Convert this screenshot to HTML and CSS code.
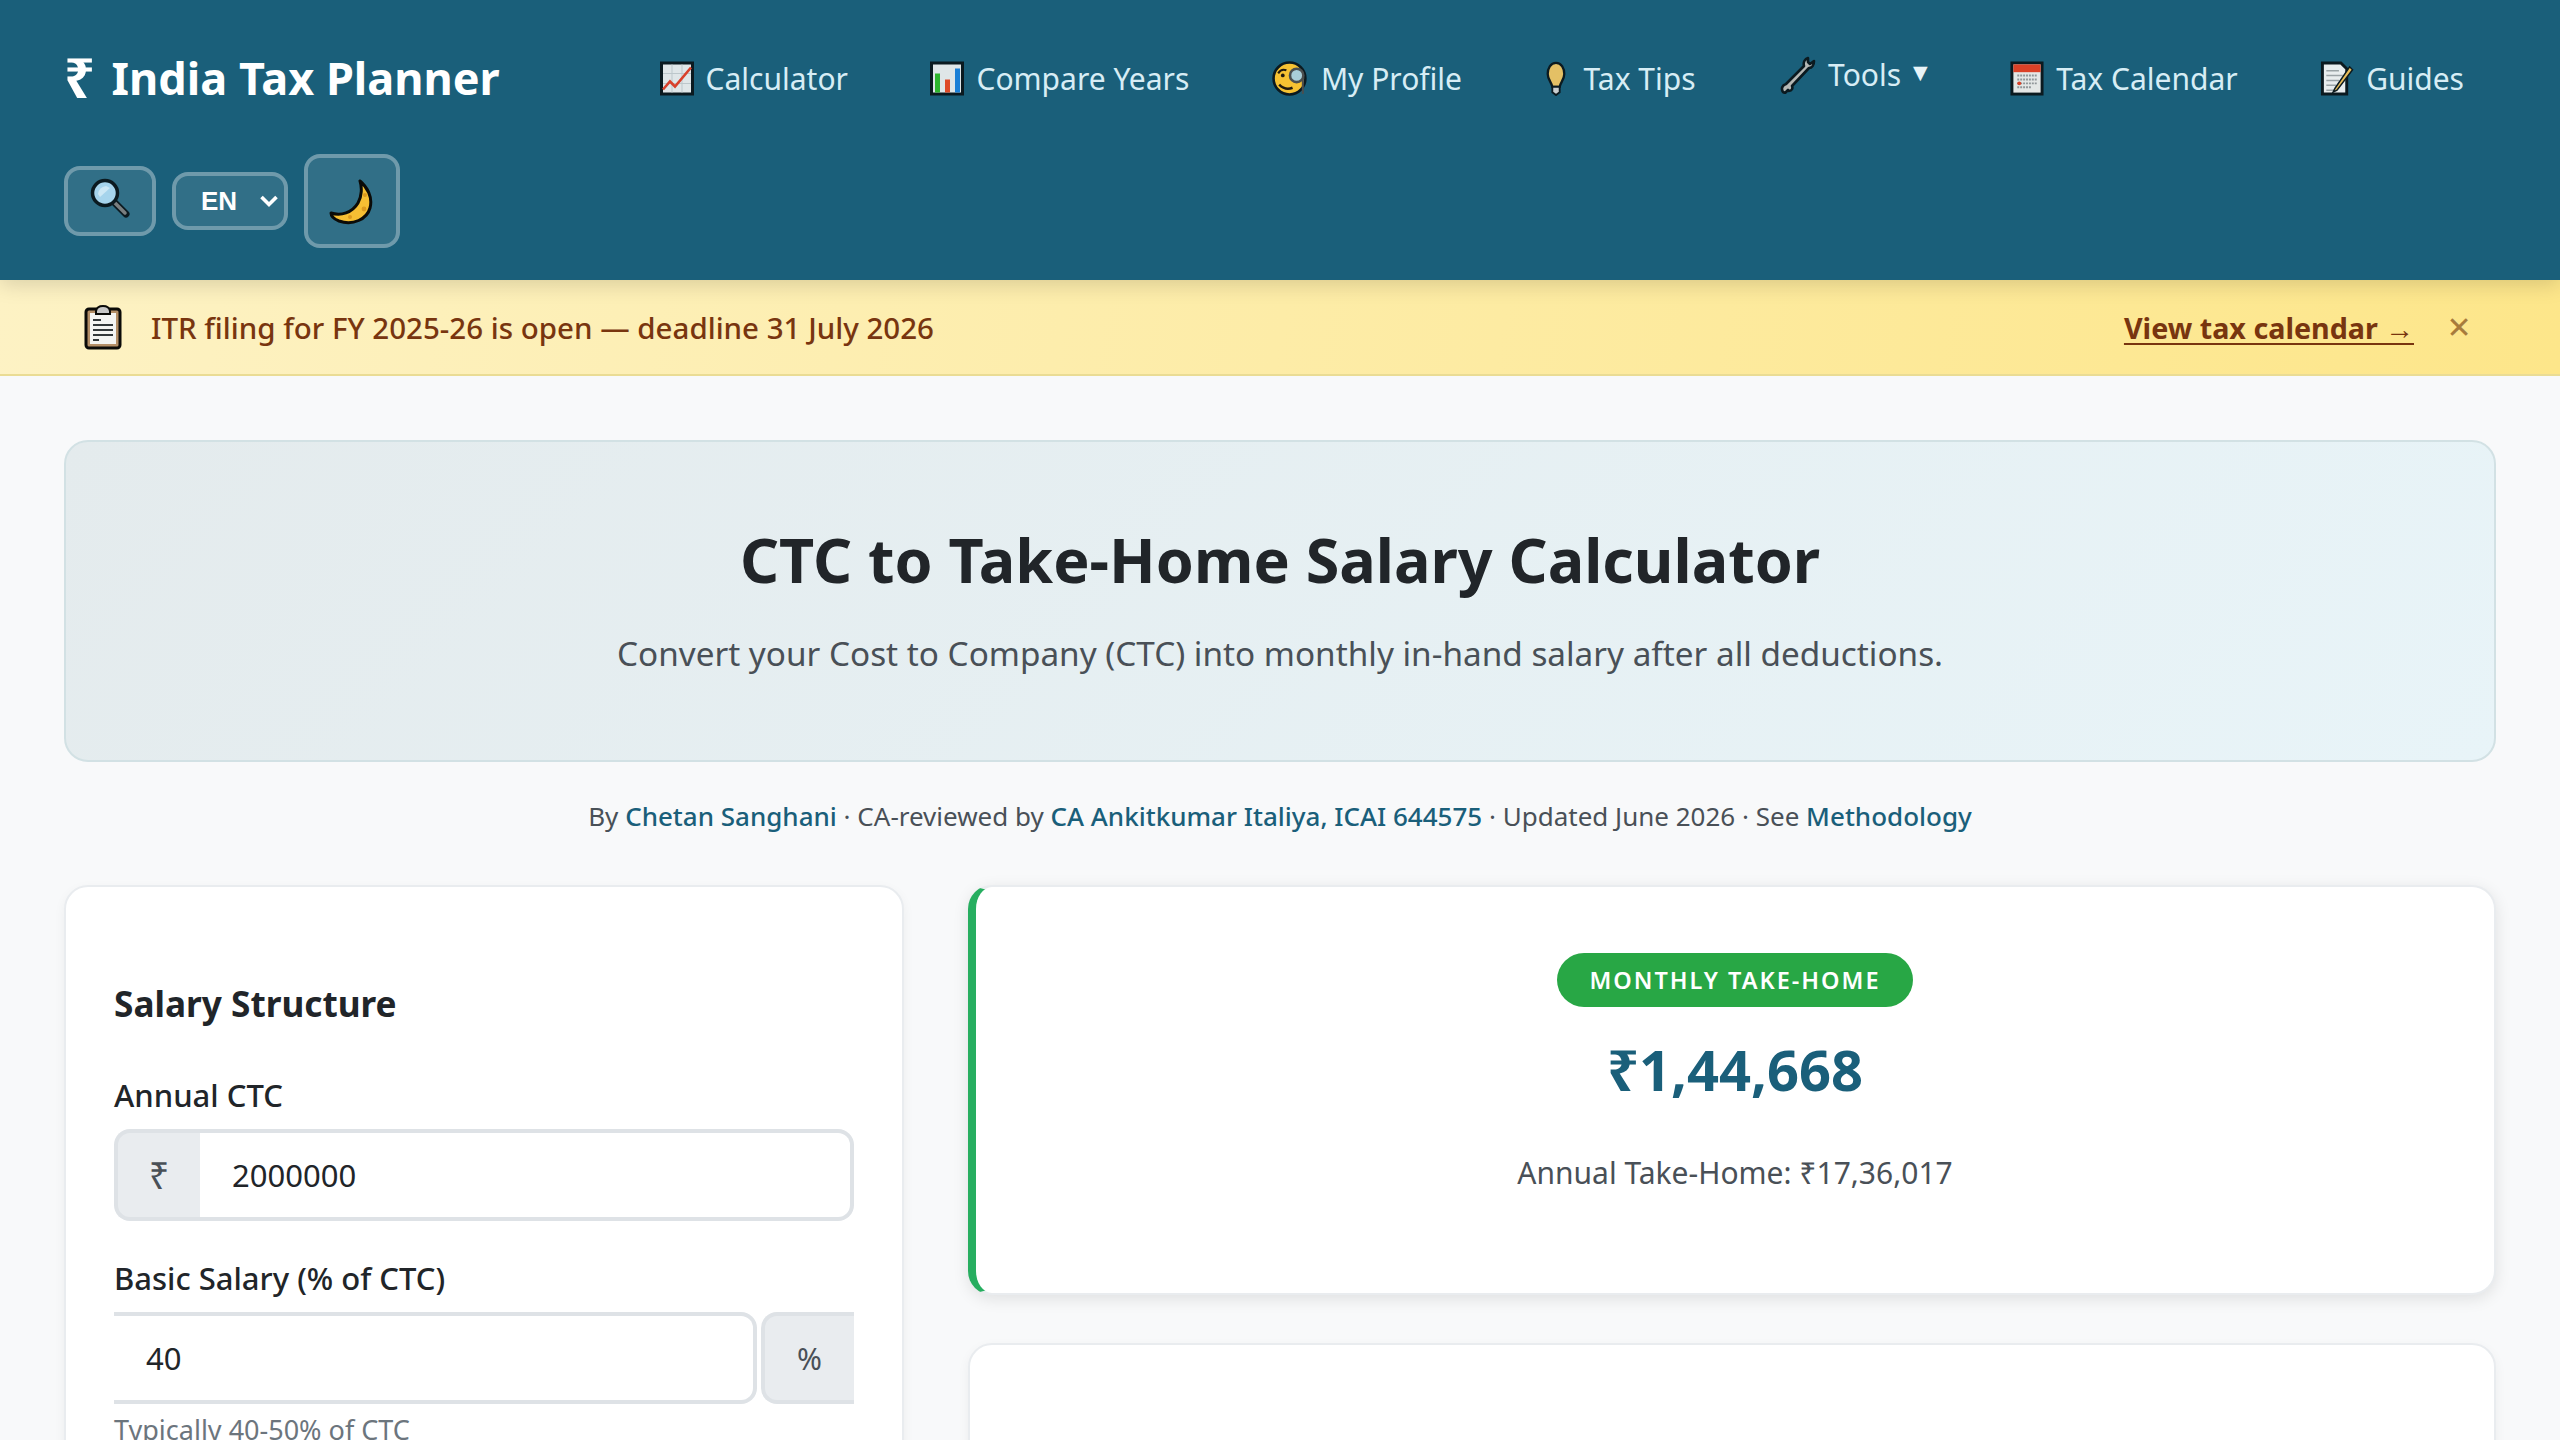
FILE: index.html
```html
<!DOCTYPE html>
<html lang="en">
<head>
    <meta charset="UTF-8">
    <meta name="viewport" content="width=device-width, initial-scale=1.0">
    <title>CTC to Take-Home Salary Calculator</title>
    <link rel="stylesheet" href="styles.css">
</head>
<body>
    <header class="site-header">
        <a class="logo" href="#"><span class="logo-mark">₹</span> India Tax Planner</a>
        <nav class="main-nav">
            <a class="nav-link" href="#">
                <svg class="emoji" viewBox="0 0 34 34"><rect x="1.500" y="1.500" width="31" height="31" fill="#dfe6e8" stroke="#0b1a20" stroke-width="3"/><path d="M3 12H31M3 22H31M12 3V31M22 3V31" stroke="#bcc7cb" stroke-width="1"/><path d="M3 28L10 20L15 25L31 6" fill="none" stroke="#d8402b" stroke-width="2.600"/></svg>
                Calculator
            </a>
            <a class="nav-link" href="#">
                <svg class="emoji" viewBox="0 0 34 34"><rect x="1.500" y="1.500" width="31" height="31" fill="#dfe6e8" stroke="#0b1a20" stroke-width="3"/><rect x="5" y="12" width="5" height="19" fill="#2db52d"/><rect x="15" y="18" width="5" height="13" fill="#de4a28"/><rect x="25" y="7" width="5" height="24" fill="#1a7fd6"/></svg>
                Compare Years
            </a>
            <a class="nav-link" href="#">
                <svg class="emoji emoji-face" viewBox="0 0 36 36"><circle cx="17" cy="18" r="15.500" fill="#f6c232" stroke="#0b1a20" stroke-width="2.500"/><path d="M6 13Q9 8 14 10" fill="none" stroke="#201a10" stroke-width="2"/><circle cx="10.500" cy="15" r="1.800" fill="#201a10"/><path d="M7 24Q13 30 20 27" fill="none" stroke="#201a10" stroke-width="2.400"/><circle cx="24" cy="15" r="6.500" fill="#a9cfd9" stroke="#4b4f4f" stroke-width="2.500"/><path d="M30 18V33" stroke="#4b4f4f" stroke-width="2"/></svg>
                My Profile
            </a>
            <a class="nav-link" href="#">
                <svg class="emoji emoji-narrow" viewBox="0 0 22 38"><path d="M11 2C5 2 2 8 2 14C2 20 6 23 7 28H15C16 23 20 20 20 14C20 8 17 2 11 2Z" fill="#e4c065" stroke="#0b1a20" stroke-width="2.500"/><path d="M7 28H15V34L11 37L7 34Z" fill="#c9ced0" stroke="#0b1a20" stroke-width="2"/></svg>
                Tax Tips
            </a>
            <a class="nav-link nav-tools" href="#">
                <svg class="emoji emoji-tool" viewBox="0 0 36 38"><path d="M29 2C26 3 24 6 25 10L7 28C3 29 2 33 4 36L6 37L9 34L10 35C13 35 14 32 13 30L30 12C33 12 35 9 35 5L31 8L29 6Z" fill="#b5b8b5" stroke="#0b1a20" stroke-width="2.600" stroke-linejoin="round"/></svg>
                Tools <span class="caret">▼</span>
            </a>
            <a class="nav-link" href="#">
                <svg class="emoji" viewBox="0 0 34 36"><rect x="1.500" y="2" width="31" height="32" fill="#e4e7e6" stroke="#0b1a20" stroke-width="3"/><rect x="3" y="3.500" width="28" height="8" fill="#db4127"/><path d="M7 15H28M7 19H28M7 23H28M7 27H21" stroke="#8f9699" stroke-width="2" stroke-dasharray="2 1"/><circle cx="9" cy="23" r="2" fill="#db4127"/></svg>
                Tax Calendar
            </a>
            <a class="nav-link" href="#">
                <svg class="emoji" viewBox="0 0 34 36"><path d="M2 2H21L27 8V34H2Z" fill="#e8edee" stroke="#0b1a20" stroke-width="3"/><path d="M6 10H19M6 15H23M6 20H19M6 25H16M6 30H14" stroke="#9aa3a6" stroke-width="1.500"/><path d="M30 6L15 28L13 32L17 30L33 9Z" fill="#e8bd5a" stroke="#0b1a20" stroke-width="1.500"/></svg>
                Guides
            </a>
        </nav>
        <div class="header-controls">
            <button class="ctrl-btn search-btn" aria-label="Search">
                <svg class="ctrl-icon" viewBox="0 0 40 40"><path d="M23 23L36 36" stroke="#0b1a20" stroke-width="7" stroke-linecap="round"/><path d="M24 24L35 35" stroke="#7a7f80" stroke-width="3.500" stroke-linecap="round"/><circle cx="15" cy="15" r="12.500" fill="#a6d4ec" stroke="#0b1a20" stroke-width="3.500"/><path d="M8 16Q9 9 16 8L20 10L10 19Z" fill="#cde8f5"/></svg>
            </button>
            <div class="lang-select">
                <span>EN</span>
                <svg class="chevron" viewBox="0 0 20 14"><path d="M2.500 3L10 10.500L17.500 3" fill="none" stroke="#fff" stroke-width="3.600"/></svg>
            </div>
            <button class="ctrl-btn theme-btn" aria-label="Dark mode">
                <svg class="moon" viewBox="0 0 46 46"><path d="M31 2C38 8 44 18 41 29C38 40 24 47 10 42C5 40 2 37 2 34C12 37 23 34 29 24C33 17 33 8 31 2Z" fill="#f6bf33" stroke="#0b0b08" stroke-width="3" stroke-linejoin="round"/><circle cx="36" cy="16" r="2" fill="#dc9a1f"/><circle cx="35" cy="30" r="2.400" fill="#dc9a1f"/><circle cx="21" cy="38" r="2" fill="#dc9a1f"/></svg>
            </button>
        </div>
    </header>

    <div class="notice-bar">
        <svg class="notice-icon" viewBox="0 0 38 46"><rect x="2" y="5" width="34" height="39" rx="3" fill="#b48f67" stroke="#0b0b08" stroke-width="3"/><rect x="6" y="9" width="26" height="31" fill="#f4f4f2"/><path d="M12 7Q13 2 19 2Q25 2 26 7V10H12Z" fill="#c8c8c8" stroke="#0b0b08" stroke-width="2"/><path d="M9 16H17M9 21H29M9 26H29M9 31H29M9 36H15" stroke="#33383a" stroke-width="2"/></svg>
        <span class="notice-text">ITR filing for FY 2025-26 is open — deadline 31 July 2026</span>
        <a class="notice-link" href="#">View tax calendar →</a>
        <button class="notice-close" aria-label="Close">✕</button>
    </div>

    <main class="page-content">
        <section class="hero">
            <h1>CTC to Take-Home Salary Calculator</h1>
            <p>Convert your Cost to Company (CTC) into monthly in-hand salary after all deductions.</p>
        </section>

        <p class="byline">By <a href="#">Chetan Sanghani</a> · CA-reviewed by <a href="#">CA Ankitkumar Italiya, ICAI 644575</a> · Updated June 2026 · See <a href="#">Methodology</a></p>

        <div class="calc-grid">
            <section class="card form-card">
                <h2>Salary Structure</h2>
                <div class="form-group">
                    <label for="ctc">Annual CTC</label>
                    <div class="input-group">
                        <span class="addon addon-left">₹</span>
                        <input id="ctc" class="input-right" type="text" value="2000000">
                    </div>
                </div>
                <div class="form-group">
                    <label for="basic">Basic Salary (% of CTC)</label>
                    <div class="input-group">
                        <input id="basic" class="input-left" type="text" value="40">
                        <span class="addon addon-right">%</span>
                    </div>
                    <small class="hint">Typically 40-50% of CTC</small>
                </div>
            </section>

            <div class="results">
                <section class="card result-card">
                    <span class="result-badge">MONTHLY TAKE-HOME</span>
                    <div class="result-amount">₹1,44,668</div>
                    <p class="result-sub">Annual Take-Home: ₹17,36,017</p>
                </section>
                <section class="card empty-card"></section>
            </div>
        </div>
    </main>
</body>
</html>
```

FILE: styles.css
```css
* {
    box-sizing: border-box;
}

html {
    height: 100%;
    overflow: hidden;
}

body {
    margin: 0;
    background-color: #f8f9fa;
    color: #212529;
    font-family: "Noto Sans", "Open Sans", sans-serif;
}

a {
    text-decoration: none;
}

/* Header */
.site-header {
    display: flex;
    flex-wrap: wrap;
    align-items: center;
    align-content: flex-start;
    row-gap: 30px;
    height: 280px;
    padding: 32px 64px;
    background-color: #1a5f7a;
    position: relative;
    z-index: 2;
    box-shadow: 0 4px 20px rgba(0, 0, 0, 0.15);
}

.logo {
    color: #fff;
    font-size: 45px;
    font-weight: 700;
    line-height: 92px;
    height: 92px;
}

.logo-mark {
    font-size: 54px;
    line-height: 0;
    vertical-align: -3px;
    margin-right: 5px;
}

.main-nav {
    display: flex;
    align-items: center;
    gap: 18.5px;
    margin-left: auto;
    padding-top: 1px;
}

.nav-link {
    display: flex;
    align-items: center;
    gap: 12px;
    padding: 0 32px;
    color: #d7edf5;
    font-size: 30px;
    line-height: 48px;
    white-space: nowrap;
}

.nav-tools {
    margin-bottom: 8px;
}

.caret {
    font-family: "DejaVu Sans", sans-serif;
    font-size: 19px;
    line-height: 20px;
    color: #e8f4f8;
    margin-bottom: 6px;
}

.emoji {
    width: 34px;
    height: 35px;
    flex: none;
}

.emoji-face {
    width: 37px;
    height: 37px;
}

.emoji-narrow {
    width: 22px;
    margin-right: 5px;
}

.emoji-tool {
    width: 38px;
    height: 38px;
}

.header-controls {
    display: flex;
    align-items: center;
    gap: 16px;
    width: 100%;
}

.ctrl-btn {
    display: flex;
    justify-content: center;
    padding: 0;
    background-color: rgba(255, 255, 255, 0.1);
    border: 4px solid rgba(255, 255, 255, 0.3);
    border-radius: 16px;
}

.search-btn {
    width: 92px;
    height: 70px;
    padding-top: 8px;
}

.ctrl-icon {
    width: 40px;
    height: 40px;
}

.theme-btn {
    width: 96px;
    height: 94px;
    padding-top: 2px;
    align-items: center;
}

.moon {
    width: 46px;
    height: 46px;
}

.lang-select {
    display: flex;
    align-items: center;
    width: 116px;
    height: 58px;
    padding-left: 25px;
    color: #fff;
    font-family: "Liberation Sans", Arial, sans-serif;
    font-size: 26px;
    font-weight: 700;
    background-color: rgba(255, 255, 255, 0.1);
    border: 4px solid rgba(255, 255, 255, 0.3);
    border-radius: 16px;
}

.chevron {
    width: 20px;
    height: 14px;
    margin-left: 22px;
}

/* Notice bar */
.notice-bar {
    display: flex;
    align-items: center;
    height: 96px;
    padding: 0 64px 0 84px;
    background: linear-gradient(100deg, #fdf2c4, #fde68a);
    border-bottom: 2px solid #eadc94;
    color: #78350f;
    font-size: 29.5px;
    font-weight: 500;
}

.notice-icon {
    width: 38px;
    height: 46px;
    margin-right: 29px;
}

.notice-text {
    flex: 1;
}

.notice-link {
    color: #78350f;
    font-weight: 700;
    font-size: 28.700px;
    text-decoration: underline;
    text-underline-offset: 4px;
}

.notice-close {
    width: 26px;
    margin: 0 24px 0 32px;
    padding: 0;
    background: none;
    border: none;
    color: #a87b3c;
    font-family: "DejaVu Sans", sans-serif;
    font-size: 30px;
    font-weight: 700;
}

/* Page content */
.page-content {
    padding: 64px 64px 0;
}

.hero {
    height: 322px;
    padding-top: 76px;
    text-align: center;
    background: linear-gradient(135deg, #e4ebed, #e8f4f8);
    border: 2px solid #d2e1e4;
    border-radius: 24px;
}

.hero h1 {
    margin: 0;
    font-size: 61px;
    line-height: 84px;
    font-weight: 700;
}

.hero p {
    margin: 27px 0 0;
    color: #495057;
    font-size: 33.3px;
    line-height: 48px;
}

.byline {
    margin: 36px 0 51px;
    text-align: center;
    color: #495057;
    font-size: 26px;
    line-height: 36px;
}

.byline a {
    color: #1a5f7a;
    font-weight: 500;
}

.calc-grid {
    display: grid;
    grid-template-columns: 840px 1fr;
    gap: 64px;
}

.card {
    background-color: #fff;
    border: 2px solid #e9ecef;
    border-radius: 24px;
    box-shadow: 0 4px 12px rgba(0, 0, 0, 0.05);
}

.form-card {
    padding: 92px 48px 48px;
    min-height: 640px;
}

.form-card h2 {
    margin: 0 0 46px;
    font-size: 35.2px;
    line-height: 48px;
    font-weight: 700;
}

.form-group {
    margin-bottom: 35px;
}

.form-group label {
    display: block;
    margin-bottom: 12px;
    font-size: 31px;
    line-height: 44px;
    font-weight: 500;
}

.input-group {
    display: flex;
    height: 92px;
}

.input-group input {
    flex: 1;
    min-width: 0;
    padding: 0 32px;
    font-family: inherit;
    font-size: 31px;
    color: #212529;
    background-color: #fff;
    border: 4px solid #dee2e6;
}

.input-right {
    border-left: none !important;
    border-radius: 0 16px 16px 0;
}

.input-left {
    border-left: none !important;
    border-radius: 0 16px 16px 0;
}

.addon {
    display: flex;
    align-items: center;
    justify-content: center;
    color: #495057;
    font-size: 30px;
    background-color: #e9ecef;
    border: 4px solid #dee2e6;
}

.addon-left {
    width: 86px;
    font-size: 36px;
    border-right: none;
    border-radius: 16px 0 0 16px;
}

.addon-right {
    width: 93px;
    margin-left: 4px;
    border-right: none;
    border-radius: 16px 0 0 16px;
}

.hint {
    display: block;
    margin-top: 8px;
    color: #6c757d;
    font-size: 27px;
    line-height: 36px;
}

.results {
    display: flex;
    flex-direction: column;
    gap: 48px;
}

.result-card {
    display: flex;
    flex-direction: column;
    align-items: center;
    height: 410px;
    padding-top: 66px;
    border-left: 8px solid #27ae60;
    box-shadow: 0 4px 16px rgba(0, 0, 0, 0.1);
}

.result-badge {
    display: block;
    padding: 0 32px;
    height: 54px;
    color: #fff;
    font-size: 23.500px;
    line-height: 54px;
    font-weight: 600;
    letter-spacing: 2px;
    background-color: #28a745;
    border-radius: 27px;
}

.result-amount {
    margin-top: 24px;
    color: #1a5f7a;
    font-size: 56px;
    line-height: 76px;
    font-weight: 700;
}

.result-sub {
    margin: 44px 0 0;
    color: #495057;
    font-size: 30px;
    line-height: 44px;
}

.empty-card {
    min-height: 400px;
}
```
